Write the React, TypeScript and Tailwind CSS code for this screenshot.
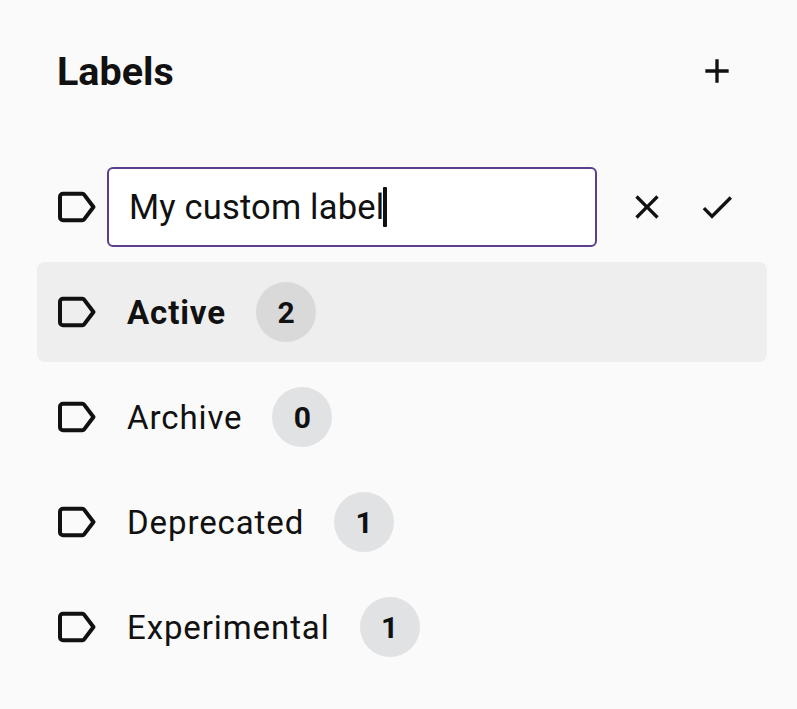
import React from 'react';

const ITEMS = [
  { name: 'Active', count: 2, active: true },
  { name: 'Archive', count: 0, active: false },
  { name: 'Deprecated', count: 1, active: false },
  { name: 'Experimental', count: 1, active: false },
];

function LabelIcon() {
  return (
    <svg viewBox="0 0 48 48" className="w-12 h-12 shrink-0 fill-none stroke-[#111111] stroke-[4px]" strokeLinejoin="round">
      <path d="M11 10.8H30.5a2 2 0 0 1 1.6.8L41.5 24l-9.4 12.4a2 2 0 0 1-1.6.8H11a3 3 0 0 1-3-3V13.8a3 3 0 0 1 3-3z" />
    </svg>
  );
}

function Icon({ d }: { d: string }) {
  return (
    <svg viewBox="0 0 24 24" className="w-10 h-10 shrink-0 fill-[#111111]">
      <path d={d} />
    </svg>
  );
}

export default function App() {
  return (
    <div className="w-[797px] h-[709px] bg-[#fafafa] text-[#111111] overflow-hidden font-['Roboto',sans-serif] pl-[37px] pr-[30px]">
      {/* Header */}
      <div className="flex items-center justify-between h-[142px] pl-[20px] pr-[30px]">
        <h2 className="text-[39.5px] font-bold leading-none pt-[2px]">Labels</h2>
        <Icon d="M19 13h-6v6h-2v-6H5v-2h6V5h2v6h6v2z" />
      </div>

      {/* New label row */}
      <div className="flex items-center h-[80px] mt-[25px] pl-[15px]">
        <LabelIcon />
        <div className="w-[490px] h-[80px] ml-[7px] flex items-center pl-[20px] bg-white border-2 border-[#5b3f8c] rounded-[6px] text-[34.5px] tracking-[0.18px]">
          <span className="pt-[2px]">My custom label</span>
          <span className="w-[4px] h-[40px] -ml-[1px] bg-[#111111] rounded-[1px]" />
        </div>
        <div className="flex items-center gap-[30px] ml-[30px]">
          <Icon d="M19 6.41 17.59 5 12 10.59 6.41 5 5 6.41 10.59 12 5 17.59 6.41 19 12 13.41 17.59 19 19 17.59 13.41 12z" />
          <Icon d="M9 16.17 4.83 12l-1.42 1.41L9 19 21 7l-1.41-1.41z" />
        </div>
      </div>

      {/* Label list */}
      <div className="flex flex-col gap-[5px] mt-[15px]">
        {ITEMS.map((item) => (
          <div
            key={item.name}
            className={`flex items-center h-[100px] pl-[15px] rounded-[8px] ${item.active ? 'bg-[#eeeeee]' : ''}`}
          >
            <LabelIcon />
            <span className={`ml-[27px] pt-[1px] text-[33px] tracking-[0.9px] ${item.active ? 'font-bold' : ''}`}>{item.name}</span>
            <span
              className={`ml-[30px] w-[60px] h-[60px] rounded-full flex items-center justify-center text-[30px] font-bold ${item.active ? 'bg-[#d9d9d9]' : 'bg-[#e1e2e4]'}`}
            >
              {item.count}
            </span>
          </div>
        ))}
      </div>
    </div>
  );
}
